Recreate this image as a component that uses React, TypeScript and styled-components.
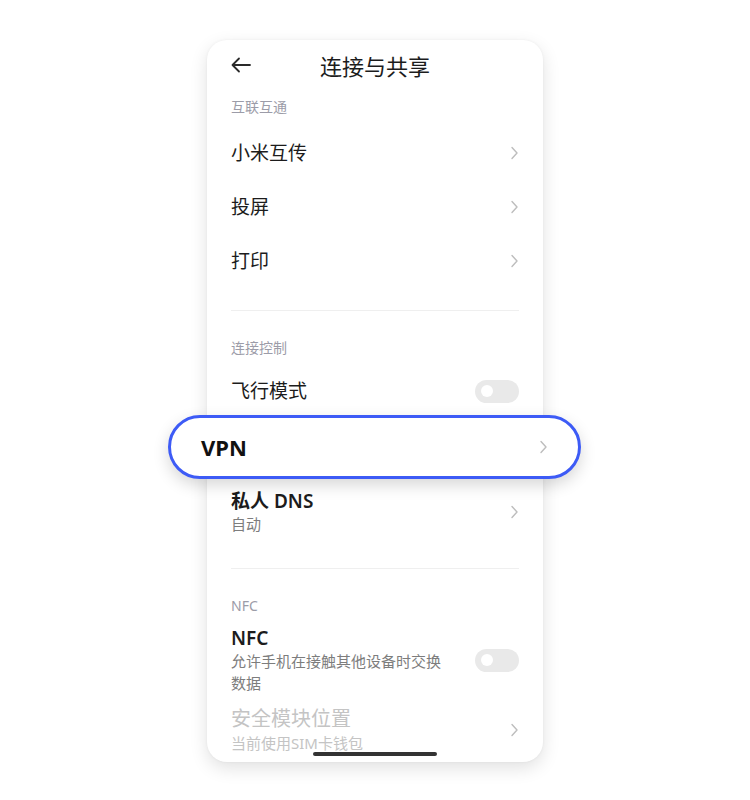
import styled, { createGlobalStyle } from "styled-components";

const GlobalStyle = createGlobalStyle`
  body {
    margin: 0;
    background: #ffffff;
    font-family: "Noto Sans", "Noto Sans CJK SC", sans-serif;
  }
`;

const Page = styled.div`
  width: 750px;
  height: 800px;
  padding-top: 40px;
  box-sizing: border-box;
`;

const Card = styled.div`
  position: relative;
  width: 336px;
  height: 722px;
  margin: 0 auto;
  background: #fff;
  border-radius: 20px;
  box-shadow: 0 6px 18px rgba(0, 0, 0, 0.12), 0 0 3px rgba(0, 0, 0, 0.05);
  display: flex;
  flex-direction: column;
`;

const Header = styled.div`
  height: 50px;
  flex-shrink: 0;
  display: grid;
  grid-template-columns: 50px 1fr 50px;
  align-items: center;
  padding: 0 24px;
`;

const Title = styled.div`
  text-align: center;
  font-size: 22px;
  color: #1c1c1c;
`;

const SectionLabel = styled.div`
  height: 36px;
  flex-shrink: 0;
  box-sizing: border-box;
  display: flex;
  align-items: center;
  padding: 0 24px 4px;
  font-size: 14px;
  color: #9c9ca8;
`;

const Row = styled.div<{ $h: number }>`
  height: ${(p) => p.$h}px;
  flex-shrink: 0;
  display: flex;
  align-items: center;
  justify-content: space-between;
  padding: 0 24px;
`;

const TextCol = styled.div`
  display: flex;
  flex-direction: column;
`;

const Label = styled.div<{ $disabled?: boolean; $bold?: boolean }>`
  font-size: 19px;
  line-height: 24px;
  color: ${(p) => (p.$disabled ? "#c4c4c4" : "#1c1c1c")};
  font-weight: ${(p) => (p.$bold ? 600 : 400)};
`;

const DisabledLabel = styled(Label)`
  font-size: 20px;
  line-height: 26px;
`;

const Sub = styled.div<{ $disabled?: boolean }>`
  font-size: 15px;
  line-height: 22px;
  color: ${(p) => (p.$disabled ? "#c4c4c4" : "#7d7d7d")};
  max-width: 218px;
`;

const Divider = styled.div<{ $top: number; $bottom: number }>`
  height: 1px;
  flex-shrink: 0;
  background: #efefef;
  margin: ${(p) => p.$top}px 24px ${(p) => p.$bottom}px;
`;

const Toggle = styled.div`
  width: 44px;
  height: 23px;
  border-radius: 12px;
  background: #e9e9e9;
  display: flex;
  align-items: center;
  padding-left: 6px;
  box-sizing: border-box;
  flex-shrink: 0;
  &::before {
    content: "";
    width: 12px;
    height: 12px;
    border-radius: 50%;
    background: #fff;
  }
`;

const Highlight = styled.div`
  height: 64px;
  flex-shrink: 0;
  margin: 0 -38px 0 -39px;
  box-sizing: border-box;
  border: 3px solid #3d5bf6;
  border-radius: 32px;
  background: #fff;
  box-shadow: 0 6px 16px rgba(0, 0, 0, 0.16);
  display: flex;
  align-items: center;
  justify-content: space-between;
  padding: 0 30px;
  position: relative;
  z-index: 1;
`;

const HighlightText = styled.div`
  font-size: 22px;
  font-weight: 700;
  color: #111;
`;

const HomeBar = styled.div`
  position: absolute;
  left: 106px;
  bottom: 6px;
  width: 124px;
  height: 4px;
  border-radius: 2px;
  background: #333;
`;

function Chevron() {
  return (
    <svg width="9" height="14" viewBox="0 0 9 14">
      <polyline
        points="2,1.5 7,7 2,12.5"
        fill="none"
        stroke="#bdbdbd"
        strokeWidth="1.4"
        strokeLinecap="round"
        strokeLinejoin="round"
      />
    </svg>
  );
}

function BackArrow() {
  return (
    <svg width="20" height="16" viewBox="0 0 20 16">
      <path
        d="M19 8H2M8 1.5L1.5 8L8 14.5"
        fill="none"
        stroke="#2a2a2a"
        strokeWidth="1.8"
        strokeLinecap="round"
        strokeLinejoin="round"
      />
    </svg>
  );
}

export default function App() {
  return (
    <Page>
      <GlobalStyle />
      <Card>
        <Header>
          <BackArrow />
          <Title>连接与共享</Title>
          <span />
        </Header>

        <SectionLabel>互联互通</SectionLabel>
        {["小米互传", "投屏", "打印"].map((t) => (
          <Row key={t} $h={54}>
            <Label>{t}</Label>
            <Chevron />
          </Row>
        ))}

        <Divider $top={22} $bottom={20} />
        <SectionLabel>连接控制</SectionLabel>
        <Row $h={48}>
          <Label>飞行模式</Label>
          <Toggle />
        </Row>

        <Highlight>
          <HighlightText>VPN</HighlightText>
          <Chevron />
        </Highlight>

        <Row $h={66}>
          <TextCol>
            <Label $bold>私人 DNS</Label>
            <Sub>自动</Sub>
          </TextCol>
          <Chevron />
        </Row>

        <Divider $top={23} $bottom={20} />
        <SectionLabel>NFC</SectionLabel>
        <Row $h={70}>
          <TextCol>
            <Label $bold>NFC</Label>
            <Sub>允许手机在接触其他设备时交换数据</Sub>
          </TextCol>
          <Toggle />
        </Row>

        <Row $h={70}>
          <TextCol>
            <DisabledLabel $disabled>安全模块位置</DisabledLabel>
            <Sub $disabled>当前使用SIM卡钱包</Sub>
          </TextCol>
          <Chevron />
        </Row>

        <HomeBar />
      </Card>
    </Page>
  );
}
